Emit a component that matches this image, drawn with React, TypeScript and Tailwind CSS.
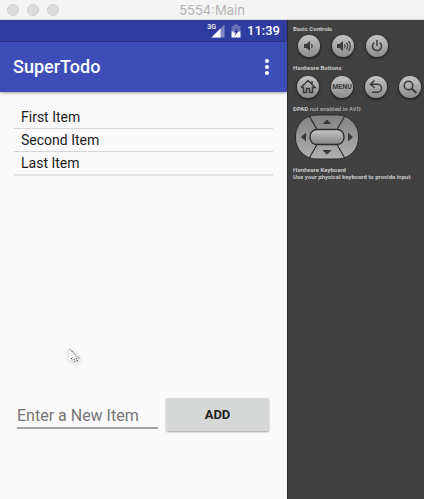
import type { ReactNode } from "react";

const items = ["First Item", "Second Item", "Last Item"];

function RoundButton({ label, children }: { label: string; children: ReactNode }) {
  return (
    <button
      type="button"
      aria-label={label}
      className="flex size-[22px] shrink-0 items-center justify-center rounded-full bg-linear-to-b from-[#c4c4c4] to-[#8c8c8c] text-[#3a3a3a] shadow-[0_1px_2px_1px_rgba(0,0,0,0.4)]"
    >
      {children}
    </button>
  );
}

function Glyph({ children }: { children: ReactNode }) {
  return (
    <svg viewBox="0 0 22 22" className="size-[22px]" fill="none" stroke="currentColor" strokeWidth="1.5">
      {children}
    </svg>
  );
}

function TitleBar() {
  return (
    <header className="relative flex h-5 items-center justify-center border-b border-[#d9dcd8] bg-[#f4f4f4]">
      <div className="absolute left-[7px] flex gap-2">
        <span className="size-3 rounded-full border border-[#d0d0d0] bg-[#dcdcdc]" />
        <span className="size-3 rounded-full border border-[#d0d0d0] bg-[#dcdcdc]" />
        <span className="size-3 rounded-full border border-[#d0d0d0] bg-[#dcdcdc]" />
      </div>
      <h1 className="font-[Inter,sans-serif] text-[13px] leading-4 text-[#b3b3b3]">5554:Main</h1>
    </header>
  );
}

function StatusBar() {
  return (
    <div className="flex h-[22px] items-center justify-end bg-[#303c9f] pr-[7px] text-white shadow-[inset_0_-1px_1px_#2b368c]">
      <span className="mb-2 text-[7px] leading-2 font-medium">3G</span>
      <svg viewBox="0 0 14 14" className="mr-[6px] -ml-[5px] size-[14px]">
        <path d="M13.500 0.500v13H0.500z" fill="#7f87c4" />
        <path d="M9.500 4.500V13.500H0.500z" fill="#fff" />
      </svg>
      <svg viewBox="0 0 10 14" className="mr-[6px] h-[14px] w-[10px]">
        <path d="M0.500 2h2.500V0.500h4V2h2.500v6H0.500z" fill="#6972ba" />
        <path d="M0.500 7.500h9v6h-9z" fill="#fff" />
        <path d="M6.500 3.500 2.500 8.500h2.200l-1 3.500 4-5H5.500z" fill="#303c9f" />
      </svg>
      <span className="text-[13px] leading-4 font-medium">11:39</span>
    </div>
  );
}

function Phone() {
  return (
    <main className="flex min-w-0 flex-1 flex-col bg-[#fafafa] font-[Roboto,sans-serif]">
      <StatusBar />
      <div className="flex h-[50px] items-center justify-between bg-[#3d4eb8] px-[13px] text-white shadow-[0_1px_3px_rgba(0,0,0,0.35)]">
        <h2 className="text-[18px] leading-6 font-medium">SuperTodo</h2>
        <button type="button" aria-label="More options" className="flex w-[14px] flex-col items-center gap-[2px]">
          <span className="size-1 rounded-full bg-white" />
          <span className="size-1 rounded-full bg-white" />
          <span className="size-1 rounded-full bg-white" />
        </button>
      </div>
      <div className="flex flex-1 flex-col justify-between px-[14px] pt-[14px] pb-[68px]">
        <ul className="text-[14px] leading-[22px] text-[#1c1c1c]">
          {items.map((item) => (
            <li key={item} className="border-b border-[#d6d6d6] pl-[7px] last:border-b-2 last:border-[#e2e2e2]">
              {item}
            </li>
          ))}
        </ul>
        <form className="flex items-center gap-2 pr-1 pl-[3px]" onSubmit={(e) => e.preventDefault()}>
          <input
            type="text"
            aria-label="New item"
            placeholder="Enter a New Item"
            className="h-7 min-w-0 flex-1 border-b-2 border-[#a3a3a3] bg-transparent pt-1 text-[16px] text-[#222] outline-none placeholder:text-[#757575]"
          />
          <button
            type="submit"
            className="h-[33px] w-[103px] rounded-[2px] bg-[#d6d8d7] text-[13px] font-bold text-[#222] shadow-[0_1px_2px_rgba(0,0,0,0.35)]"
          >
            ADD
          </button>
        </form>
      </div>
    </main>
  );
}

function Dpad() {
  return (
    <svg viewBox="0 0 64 46" className="mt-[2px] ml-[2px] h-[46px] w-16" role="img" aria-label="Directional pad">
      <defs>
        <linearGradient id="pad" x1="0" y1="0" x2="0" y2="1">
          <stop offset="0" stopColor="#828282" />
          <stop offset="1" stopColor="#b0b0b0" />
        </linearGradient>
        <linearGradient id="key" x1="0" y1="0" x2="0" y2="1">
          <stop offset="0" stopColor="#c6c6c6" />
          <stop offset="1" stopColor="#858585" />
        </linearGradient>
      </defs>
      <rect x="0.500" y="1" width="63" height="44" rx="21" fill="url(#pad)" stroke="#2c2c2c" />
      <path d="M14 1.500 22 15.500M42 15.500 50 1.500M14 44.500 22 30.500M42 30.500 50 44.500" fill="none" stroke="#2c2c2c" strokeWidth="1.200" />
      <rect x="15" y="15.500" width="34" height="15" rx="7" fill="url(#key)" stroke="#2c2c2c" strokeWidth="1.400" />
      <path d="M27.500 10 32 5.500 36.500 10zM27.500 36 32 40.500 36.500 36zM11 18.500 6 23 11 27.500zM53 18.500 58 23 53 27.500z" fill="#373737" />
    </svg>
  );
}

function Controls() {
  return (
    <aside className="w-[137px] shrink-0 border-l border-[#2b2b2b] bg-[#414141] pt-[5px] pl-[5px] font-[Roboto,sans-serif] text-[6px] leading-[7px] font-bold whitespace-nowrap text-[#c8c8c8]">
      <h3>Basic Controls</h3>
      <div className="mt-[3px] ml-[5px] flex gap-3">
        <RoundButton label="Volume down">
          <Glyph>
            <path d="M6 9h2.500L12 6v10l-3.500-3H6z" fill="currentColor" stroke="none" />
            <path d="M13.500 9.200q1.500 1.800 0 3.600" strokeWidth="1.200" />
          </Glyph>
        </RoundButton>
        <RoundButton label="Volume up">
          <Glyph>
            <path d="M5 9h2.500L11 6v10l-3.500-3H5z" fill="currentColor" stroke="none" />
            <path d="M12.500 9.200q1.500 1.800 0 3.600M14.500 7.700q2.600 3.300 0 6.600M16.500 6.200q3.600 4.800 0 9.600" strokeWidth="1.100" />
          </Glyph>
        </RoundButton>
        <RoundButton label="Power">
          <Glyph>
            <path d="M8.200 7.600a4.500 4.500 0 1 0 5.600 0M11 5v6" />
          </Glyph>
        </RoundButton>
      </div>
      <h3 className="mt-[7px]">Hardware Buttons</h3>
      <div className="mt-[5px] ml-1 flex gap-3">
        <RoundButton label="Home">
          <Glyph>
            <path d="M4 11.500 11 4.500l7 7h-2.500V16.500h-3v-4h-3v4h-3v-5h-2.500M15 8.500V5" strokeWidth="1.500" />
          </Glyph>
        </RoundButton>
        <RoundButton label="Menu">
          <span className="text-[7px]">MENU</span>
        </RoundButton>
        <RoundButton label="Back">
          <Glyph>
            <path d="M9.500 4.500 5.500 8.200l4 3.500M6 8.200H12.500a4 4 0 0 1 0 8H7" />
          </Glyph>
        </RoundButton>
        <RoundButton label="Search">
          <Glyph>
            <circle cx="9.500" cy="9.500" r="4.300" />
            <path d="m12.500 12.500 5 4.500" strokeWidth="2.200" />
          </Glyph>
        </RoundButton>
      </div>
      <p className="mt-[7px]">
        DPAD <span className="font-medium text-[#b0b0b0]">not enabled in AVD</span>
      </p>
      <Dpad />
      <h3 className="mt-[6px]">Hardware Keyboard</h3>
      <p>Use your physical keyboard to provide input</p>
    </aside>
  );
}

export default function App() {
  return (
    <div className="relative flex min-h-screen flex-col">
      <TitleBar />
      <div className="flex flex-1">
        <Phone />
        <Controls />
      </div>
      <svg viewBox="0 0 14 18" className="pointer-events-none absolute top-[347px] left-[68px] h-[18px] w-[14px] drop-shadow-sm" aria-hidden="true">
        <path d="M1 1v13l3.200-2.500L6.500 17l3.500-1-1.500-4H13z" fill="#fff" stroke="#ddd" strokeWidth="0.600" />
        <path d="M2 2.500 11.500 12M3 12l2-2M6 12l1.500 3.500M8 11l1.500 3.500" fill="none" stroke="#333" strokeWidth="1" strokeDasharray="1.400 0.800" />
      </svg>
    </div>
  );
}
